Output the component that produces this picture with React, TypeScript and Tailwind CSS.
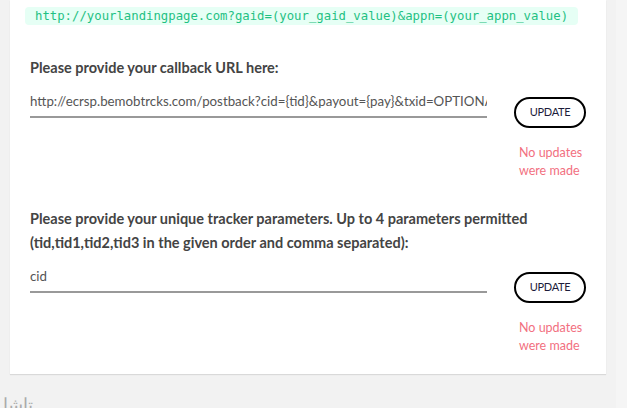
const rows = [
  {
    label: 'Please provide your callback URL here:',
    value: 'http://ecrsp.bemobtrcks.com/postback?cid={tid}&payout={pay}&txid=OPTIONAL',
  },
  {
    label:
      'Please provide your unique tracker parameters. Up to 4 parameters permitted (tid,tid1,tid2,tid3 in the given order and comma separated):',
    value: 'cid',
  },
]

function FieldRow({ label, value }: { label: string; value: string }) {
  return (
    <div>
      <div className="w-[520px] text-[14.5px] font-bold leading-[24px] text-[#444]">{label}</div>
      <div className="flex mt-[8px]">
        <div className="w-[457px]">
          <input
            readOnly
            value={value}
            className="w-full h-[27px] bg-transparent border-b-2 border-[#999] text-[13.3px] text-[#555] outline-none pb-[4px]"
          />
        </div>
        <div className="ml-[27px] pt-[9px]">
          <button className="w-[72px] h-[31px] rounded-full border-2 border-black text-[11px] text-[#1c1c3a] tracking-tight">
            UPDATE
          </button>
          <div className="mt-[16px] ml-[5px] text-[12.5px] leading-[18px] text-[#f2707f]">
            No updates
            <br />
            were made
          </div>
        </div>
      </div>
    </div>
  )
}

export default function App() {
  return (
    <div
      className="w-[627px] h-[408px] overflow-hidden bg-[#f2f2f2] flex"
      style={{ fontFamily: 'Lato, "Open Sans", sans-serif' }}
    >
      <div className="w-[616px] pl-[10px]">
        <div className="w-[596px] bg-white pl-[15px] pb-[19px] shadow-[0_1px_1px_rgba(0,0,0,0.1)]">
          <div className="pt-[7px] flex">
            <span className="bg-[#e6fff5] rounded-[4px] px-[10px] py-[1px] text-[12.3px] leading-[16px] text-[#1fc183] font-['DejaVu_Sans_Mono',monospace]">
              http://yourlandingpage.com?gaid=(your_gaid_value)&appn=(your_appn_value)
            </span>
          </div>
          <div className="mt-[31px] pl-[5px] flex flex-col gap-[27px]">
            {rows.map((r) => (
              <FieldRow key={r.value} label={r.label} value={r.value} />
            ))}
          </div>
        </div>
        <div className="mt-[20px] -ml-[7px] text-[18px] text-[#aaa] leading-[20px]">تاشا</div>
      </div>
      <div className="w-[11px] bg-[#f5f5f5]" />
    </div>
  )
}
